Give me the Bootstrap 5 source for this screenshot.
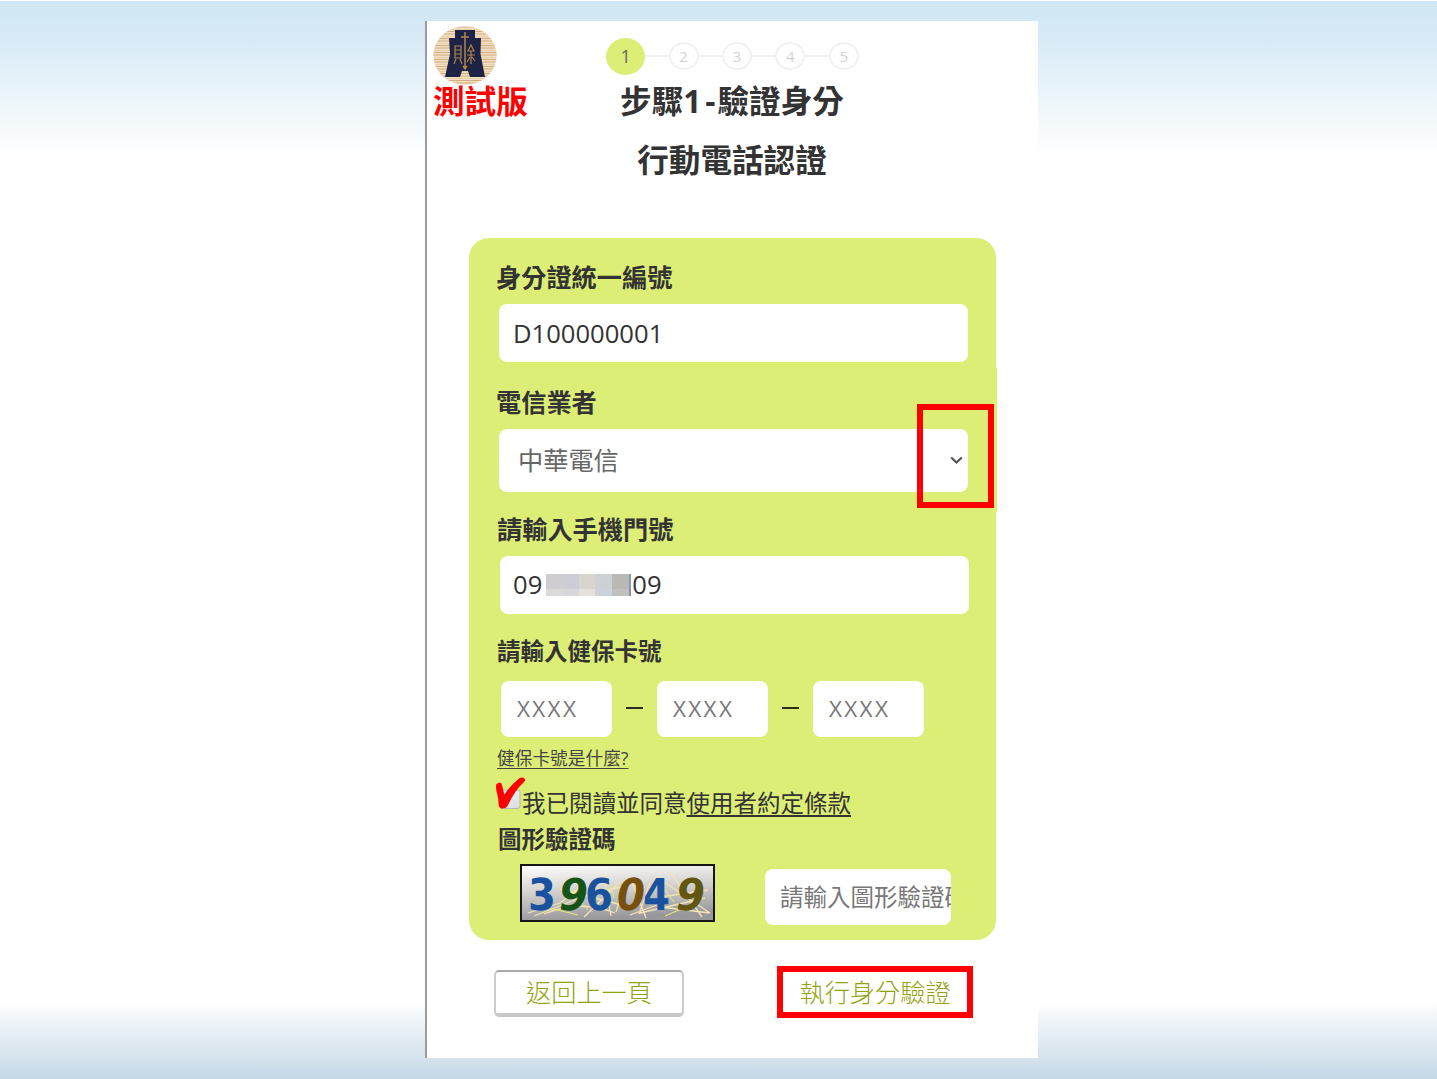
<!DOCTYPE html>
<html lang="zh-Hant">
<head>
<meta charset="utf-8">
<meta name="viewport" content="width=device-width, initial-scale=1">
<title>行動電話認證</title>
<link href="https://cdn.jsdelivr.net/npm/bootstrap@5.3.0/dist/css/bootstrap.min.css" rel="stylesheet">
<style>
body{font-family:"Open Sans","Noto Sans CJK TC",sans-serif;color:#333;background:#fff}
.stage{height:1079px;padding-top:21px;overflow:hidden;background:
 linear-gradient(#fff 0 1px,transparent 1px),
 linear-gradient(#cfe6f4 0,#d8eaf6 40px,#e7f3fa 85px,#f0f7fa 110px,#f8fbfe 135px,#fff 158px,#fff 1003px,#f3f7fa 1015px,#e4edf3 1035px,#d3e2ec 1060px,#c4d8e7 1079px)}
.phone{width:613px;height:1037px;margin-left:425px;border-left:2px solid #999b9d;background:#fff}
.top{display:grid;grid-template-columns:150px 310px 150px;height:217px}
.brand{padding:5px 0 0 6px}
.brand svg{display:block}
.trial{color:#f00;font-weight:700;font-size:31.6px;line-height:32px;white-space:nowrap}
.stepper{height:38px;margin-top:16px;padding-left:1px}
.dot{width:30px;height:28px;border:2px solid #f1f1f1;border-radius:50%;font-size:15px;line-height:1;color:#d2d2d2}
.dot.on{width:39px;height:37px;border:0;background:#dcee76;color:#666;font-size:18px}
.dash{width:23.4px;height:2px;background:#f1f1f1}
.heading{font-size:31.6px;font-weight:700;line-height:44px;margin:0;text-align:center;white-space:nowrap}
.heading-sub{margin-top:15px}
.hyphen{padding:0 2px 0 4px}
.formbox{width:527px;height:702px;margin-left:42px;border-radius:20px;background:#dcee76}
.sec{padding-left:27px}
.sec-a{height:130px;padding-top:19px}
.sec-b{height:144px;width:528px;background:#dcee76;padding-top:14px;position:relative}
.lab{display:block;font-weight:700;font-size:25.2px;line-height:40px;height:40px;white-space:nowrap}
.lab.sm{font-size:23.5px}
.field{display:block;border:0;border-radius:8px;background:#fff;color:#333;outline:0;padding:0 14px;font-size:25.6px;width:469px;height:58px;margin:7px 0 0 3px}
.field::placeholder{color:#777;opacity:1}
.pick{height:63px;color:#666;padding:0 4px 0 19px;font-size:25.2px}
.mark-a{position:absolute;left:448px;top:36px;width:77px;height:104px;border:6px solid #f00}
.phone-lab{margin:-3px 0 0 1px}
.phone-no{margin:7px 0 0 4px;padding-left:13px}
.mosaic{display:grid;grid-template-columns:17px 16px 16px 17px 17px 2px;grid-template-rows:15px 7px;width:85px;margin:0 1px 0 4px}
.card-label{margin:17px 0 0 1px}
.quads{margin:10px 0 0 5px}
.quad{width:111px;height:56px;margin:0;padding:0 16px 2px;font-size:22.5px;letter-spacing:2.3px}
.hy{width:17px;height:2px;background:#2b2b20;margin:0 14px 2px}
.help{margin:9px 0 0 1px;height:24px;font-size:17.7px;line-height:24px;color:#444;white-space:nowrap}
.agree{margin-top:14px;font-size:23.5px;line-height:36px;height:36px;white-space:nowrap}
.agree-text{padding-top:1px}
.tickbox{width:26px;height:36px;flex:none;overflow:visible}
a{color:inherit;text-underline-offset:3px}
.code-label{margin:-1px 0 0 2px}
.code-row{margin:5px 0 0 24px}
.code-in{width:186px;height:56px;margin:5px 0 0 50px;padding:0 0 1px 15px;font-size:23.5px}
.bottoms{padding:30px 65px 0 67px}
.bt{font-family:"Noto Sans CJK TC",sans-serif;font-weight:300;font-size:25.2px;line-height:1;color:#93a30e;border-radius:5px;background:#fff;padding:0;white-space:nowrap}
.bt-back{width:190px;height:47px;border:2px solid #ccc;border-top-color:#aaa;border-bottom:4px solid #c8c8c8;padding-bottom:2px}
.bt-go{width:196px;height:52px;border:6px solid #f00;border-radius:0;margin-top:-4px}
</style>
<script src="https://cdn.jsdelivr.net/npm/bootstrap@5.3.0/dist/js/bootstrap.bundle.min.js"></script>
</head>
<body>
<div class="stage">
<main class="phone">
 <header class="top">
  <div class="brand">
   <svg width="64" height="59" viewBox="0 0 64 59">
    <defs><clipPath id="disc"><ellipse cx="32" cy="29.5" rx="31.7" ry="29.2"/></clipPath>
    <pattern id="grain" width="64" height="7" patternUnits="userSpaceOnUse"><rect width="64" height="7" fill="#f2dfc4"/><path d="M0 1h64M0 5.5h64" stroke="#d3ad7b" stroke-width="1"/><path d="M0 3.5h64" stroke="#e5c9a2" stroke-width=".8"/></pattern></defs>
    <g clip-path="url(#disc)"><rect width="64" height="59" fill="url(#grain)"/></g>
    <path d="M22 4H42V12H48L47.500 28L52 51H37L35 45H29L27 51H12L17 28L16 12H22Z" fill="#1d2345"/>
    <g fill="none" stroke="#b1834c" stroke-width="1.2"><path d="M32 6V42M28 11H36M30 40L32 43L34 40" stroke-width="1.5"/><path d="M22 20H28V32H22ZM22 24H28M22 28H28M23 33L21 38M27 33L29 38M38 19L35 25H41ZM38 25V38M34 29H42M37 31L34 36M39 31L42 35"/></g>
   </svg>
   <div class="trial">測試版</div>
  </div>
  <div>
   <div class="stepper d-flex align-items-center justify-content-center">
    <span class="dot on d-flex align-items-center justify-content-center">1</span><i class="dash"></i>
    <span class="dot d-flex align-items-center justify-content-center">2</span><i class="dash"></i>
    <span class="dot d-flex align-items-center justify-content-center">3</span><i class="dash"></i>
    <span class="dot d-flex align-items-center justify-content-center">4</span><i class="dash"></i>
    <span class="dot d-flex align-items-center justify-content-center">5</span>
   </div>
   <h1 class="heading mt-1">步驟1<span class="hyphen">-</span>驗證身分</h1>
   <h2 class="heading heading-sub">行動電話認證</h2>
  </div>
 </header>

 <form class="formbox">
  <div class="sec sec-a">
   <label class="lab" for="pid">身分證統一編號</label>
   <input class="field" id="pid" value="D100000001">
  </div>
  <div class="sec sec-b">
   <label class="lab">電信業者</label>
   <div class="field pick d-flex align-items-center justify-content-between">
    <span>中華電信</span>
    <svg width="15" height="14" viewBox="0 0 15 14"><path d="M2.2 3.5L7.5 8.5L12.8 3.5" fill="none" stroke="#555" stroke-width="2.2"/></svg>
   </div>
   <div class="mark-a"></div>
  </div>
  <div class="sec">
   <label class="lab phone-lab">請輸入手機門號</label>
   <div class="field phone-no d-flex align-items-center">
    <span>09</span>
    <span class="mosaic">
     <i style="background:#cfcdd2"></i><i style="background:#cccdd5"></i><i style="background:#d8d5cf"></i><i style="background:#ccd1d4"></i><i style="background:#b9b8b5"></i><i style="background:#7f9dbd"></i>
     <i style="background:#dbdadb"></i><i style="background:#d7d7dc"></i><i style="background:#e5e2dd"></i><i style="background:#cbd2d8"></i><i style="background:#c0c0bf"></i><i style="background:#8d88ad"></i>
    </span>
    <span>09</span>
   </div>
   <label class="lab sm card-label">請輸入健保卡號</label>
   <div class="quads d-flex align-items-center">
    <input class="field quad" placeholder="XXXX"><i class="hy"></i><input class="field quad" placeholder="XXXX"><i class="hy"></i><input class="field quad" placeholder="XXXX">
   </div>
   <div class="help"><a href="#">健保卡號是什麼?</a></div>
   <div class="agree d-flex">
    <svg class="tickbox" viewBox="0 0 26 36"><defs><linearGradient id="bx" y2="1"><stop stop-color="#fafafa"/><stop offset="1" stop-color="#d9d9dc"/></linearGradient></defs>
     <rect x="4.5" y="6" width="19.5" height="18.5" rx="2" fill="url(#bx)" stroke="#b6b6b6" stroke-width="1"/>
     <path d="M0.5 0L3.3 -1.500Q5.700 -1.500 6 1L8.300 10.500Q15 1 23 -5.500Q26 -7.500 28.500 -5.500Q30 -3.500 27.500 -1.500Q19 6 11.500 22Q9.500 25 5 24.500Q2.800 24 2.700 21Q2.700 15 0.500 7Q-0.500 2 0.500 0Z" fill="#f00"/></svg>
    <span class="agree-text">我已閱讀並同意<a href="#">使用者約定條款</a></span>
   </div>
   <label class="lab sm code-label">圖形驗證碼</label>
   <div class="code-row d-flex">
    <svg class="captcha" width="195" height="58" viewBox="0 0 195 58">
     <defs><linearGradient id="cg" x2=".2" y2="1"><stop stop-color="#fff"/><stop offset=".5" stop-color="#d2d1ce"/><stop offset="1" stop-color="#98989b"/></linearGradient></defs>
     <rect x="1" y="1" width="193" height="56" fill="url(#cg)" stroke="#161616" stroke-width="2"/>
     <g fill="none" stroke="#f3e3b4" stroke-width="1.3"><path d="M8 49L40 39L60 24M14 52L70 30L105 22M24 50Q60 35 95 49M64 53L100 18M83 8L91 52M108 12L96 48M112 18L126 54M130 18L119 50M135 12L190 49M140 33L188 26M140 43L190 49M52 17L92 28M40 25L98 40M150 8L182 53M120 49L185 34M110 51L145 38"/></g>
     <g fill="none" stroke="#e9e878" stroke-width="1"><path d="M45 18L68 46M87 12L94 34M137 15L154 38M145 52L180 37M26 43L58 51"/></g>
     <g font-family="DejaVu Sans" font-weight="700" font-size="44" text-rendering="geometricPrecision">
      <text x="8" y="46" fill="#1953a0" textLength="28" lengthAdjust="spacingAndGlyphs">3</text>
      <text x="39" y="46" fill="#165316" font-style="italic" textLength="29" lengthAdjust="spacingAndGlyphs">9</text>
      <text x="65" y="46" fill="#1953a0" textLength="28" lengthAdjust="spacingAndGlyphs">6</text>
      <text x="97" y="46" fill="#78500d" font-style="italic" textLength="28" lengthAdjust="spacingAndGlyphs">0</text>
      <text x="123" y="46" fill="#1953a0" textLength="27" lengthAdjust="spacingAndGlyphs">4</text>
      <text x="156" y="46" fill="#625711" font-style="italic" textLength="29" lengthAdjust="spacingAndGlyphs">9</text>
     </g>
    </svg>
    <input class="field code-in" placeholder="請輸入圖形驗證碼">
   </div>
  </div>
 </form>
 <div class="bottoms d-flex justify-content-between align-items-start">
  <button type="button" class="bt bt-back">返回上一頁</button>
  <button type="button" class="bt bt-go">執行身分驗證</button>
 </div>
</main>
</div>
</body>
</html>
